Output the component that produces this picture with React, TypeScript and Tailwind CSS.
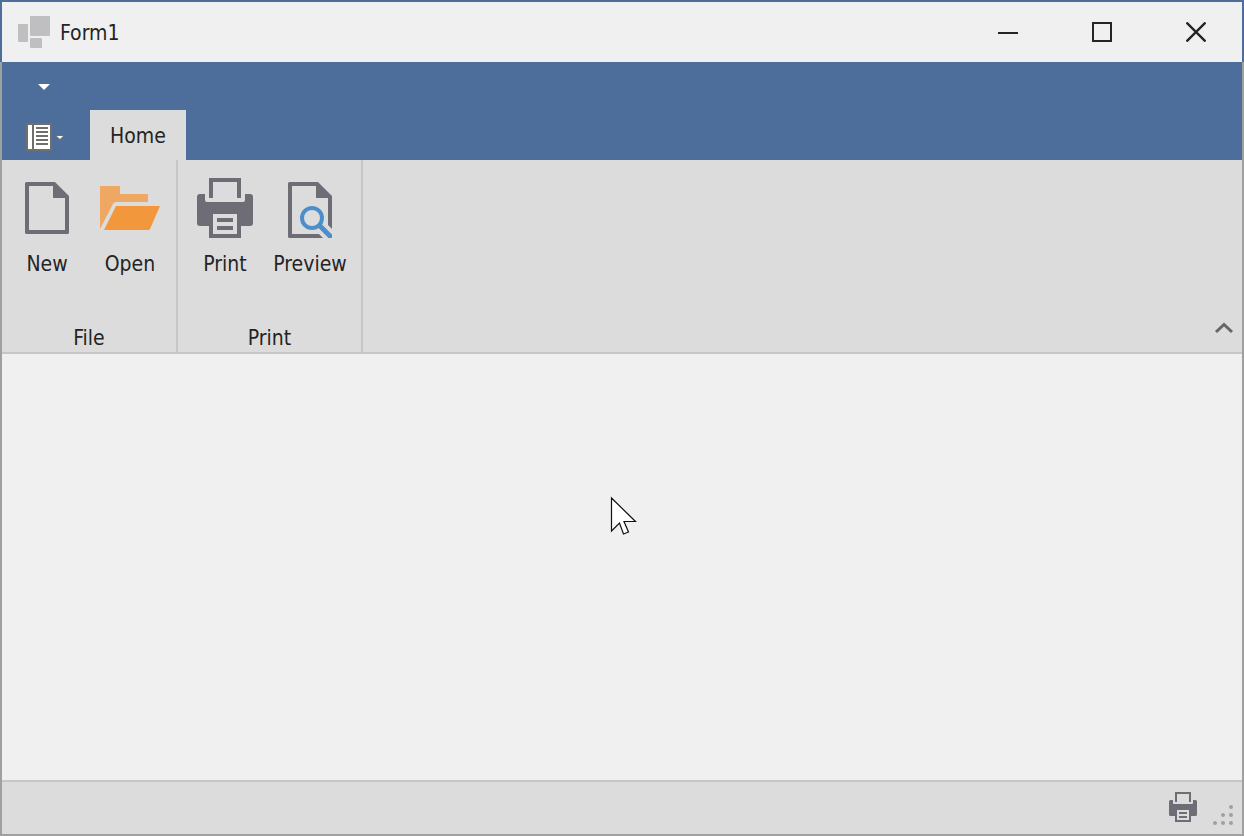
import type { ReactNode } from "react";

interface IconProps {
  className?: string;
}

function AppLogo() {
  return (
    <svg className="h-8 w-8 shrink-0" viewBox="0 0 32 32" fill="#bfbec1" aria-hidden="true">
      <rect x="0" y="8" width="10" height="18" rx="1" />
      <rect x="12" y="0" width="20" height="20" rx="1" />
      <rect x="12" y="22" width="12" height="10" rx="1" />
    </svg>
  );
}

function NewIcon() {
  return (
    <svg className="h-15 w-11" viewBox="0 0 44 60" fill="#6e6d75" aria-hidden="true">
      <path
        fillRule="evenodd"
        d="M1.5 4H30L44 18V54.500Q44 56 42.500 56H1.500Q0 56 0 54.500V5.500Q0 4 1.500 4ZM4 8V52H40V20H28V8Z"
      />
    </svg>
  );
}

function OpenIcon() {
  return (
    <svg className="h-15 w-15" viewBox="0 0 60 60" aria-hidden="true">
      <path fill="#efa764" d="M0 9Q0 8 1 8H19Q20 8 20 9V16H47Q48 16 48 17V24H16Q14 24 13 26L0 51Z" />
      <path fill="#f2973c" d="M16 28H60L50 51Q49.500 52 48.500 52H4Z" />
    </svg>
  );
}

function PrintIcon({ className }: IconProps) {
  return (
    <svg className={className} viewBox="0 0 56 60" fill="#6e6d75" aria-hidden="true">
      <path d="M12 0H44V20H40V4H16V20H12Z" />
      <path
        fillRule="evenodd"
        d="M3 16H8V22Q8 24 10 24H46Q48 24 48 22V16H53Q56 16 56 19V45Q56 48 53 48H44V60H12V48H3Q0 48 0 45V19Q0 16 3 16ZM16 36V56H40V36Z"
      />
      <path d="M20 40H36V44H20ZM20 48H36V52H20Z" />
    </svg>
  );
}

function PreviewIcon() {
  return (
    <svg className="h-15 w-11" viewBox="0 0 44 60" aria-hidden="true">
      <path
        fill="#6e6d75"
        d="M1.500 4H30L44 18V51L40 47V20H28V8H4V56H31L35 60H1.500Q0 60 0 58.500V5.500Q0 4 1.500 4Z"
      />
      <circle cx="24" cy="40" r="10" fill="none" stroke="#4c8ecc" strokeWidth="4" />
      <path d="M32 48L42 58" stroke="#4c8ecc" strokeWidth="5" strokeLinecap="round" />
    </svg>
  );
}

function MenuIcon() {
  return (
    <svg className="h-7 w-[38px]" viewBox="0 0 38 28" aria-hidden="true">
      <path fill="#716f6e" d="M0 0H26V28H0Z" />
      <path fill="#fff" d="M2 2H6V26H2ZM8 2H24V26H8Z" />
      <path fill="#716f6e" d="M10 4H22V6H10ZM10 8H22V10H10ZM10 12H22V14H10ZM10 16H22V18H10ZM10 20H22V22H10Z" />
      <path fill="#fff" stroke="#716f6e" d="M29.500 12.500H38L34 16.500Z" />
    </svg>
  );
}

interface RibbonButtonProps {
  label: string;
  icon: ReactNode;
  className: string;
}

function RibbonButton({ label, icon, className }: RibbonButtonProps) {
  return (
    <button type="button" className={`flex flex-col items-center gap-[10px] hover:bg-[#cfcfd2] ${className}`}>
      {icon}
      <span className="leading-8">{label}</span>
    </button>
  );
}

interface RibbonGroupProps {
  title: string;
  children: ReactNode;
}

function RibbonGroup({ title, children }: RibbonGroupProps) {
  return (
    <section aria-label={title} className="flex flex-col justify-between border-r-2 border-[#c6c6c6]">
      <div className="flex px-1 pt-[18px]">{children}</div>
      <div className="text-center leading-7">{title}</div>
    </section>
  );
}

function TitleBar() {
  const controlClass = "flex w-[92px] items-center justify-center hover:bg-[#dcdcdc]";

  return (
    <header className="flex h-[62px] items-stretch border-x-2 border-t-2 border-[#4d6e9b] bg-[#f0f0f0]">
      <div className="flex flex-1 items-center gap-[10px] pl-4">
        <AppLogo />
        <h1 className="pt-[2px]">Form1</h1>
      </div>
      <div className="flex gap-[2px]">
        <button type="button" aria-label="Minimize" className={controlClass}>
          <svg className="h-5 w-5" viewBox="0 0 20 20" fill="#242424">
            <path d="M0 10H20V12H0Z" />
          </svg>
        </button>
        <button type="button" aria-label="Maximize" className={controlClass}>
          <svg className="h-5 w-5" viewBox="0 0 20 20" fill="none" stroke="#242424" strokeWidth="2">
            <path d="M1 1H19V19H1Z" />
          </svg>
        </button>
        <button type="button" aria-label="Close" className={controlClass}>
          <svg className="h-5 w-5" viewBox="0 0 20 20" fill="none" stroke="#242424" strokeWidth="2.400">
            <path d="M0.500 0.500L19.500 19.500M19.500 0.500L0.500 19.500" />
          </svg>
        </button>
      </div>
    </header>
  );
}

function RibbonTabs() {
  return (
    <div className="bg-[#4d6e9b]">
      <div className="flex h-12 items-center pl-7">
        <button
          type="button"
          aria-label="Customize quick access toolbar"
          className="flex h-8 w-7 items-center justify-center pt-[2px]"
        >
          <svg className="h-[6px] w-3" viewBox="0 0 12 6" fill="#fff">
            <path d="M0 0H12L6 6Z" />
          </svg>
        </button>
      </div>
      <div className="flex h-[50px]">
        <button type="button" aria-label="Application menu" className="flex w-[88px] items-center pt-1 pl-6">
          <MenuIcon />
        </button>
        <div role="tablist" className="flex">
          <button type="button" role="tab" aria-selected="true" className="w-24 bg-[#dcdcdc] pt-[2px]">
            Home
          </button>
        </div>
      </div>
    </div>
  );
}

function Ribbon() {
  return (
    <div className="flex h-[194px] border-b-2 border-[#c6c6c6] bg-[#dcdcdc]">
      <RibbonGroup title="File">
        <RibbonButton label="New" icon={<NewIcon />} className="w-[82px]" />
        <RibbonButton label="Open" icon={<OpenIcon />} className="w-[84px]" />
      </RibbonGroup>
      <RibbonGroup title="Print">
        <RibbonButton label="Print" icon={<PrintIcon className="h-15 w-14" />} className="w-[86px]" />
        <RibbonButton label="Preview" icon={<PreviewIcon />} className="mr-[5px] w-[84px]" />
      </RibbonGroup>
      <button type="button" aria-label="Collapse ribbon" className="mt-auto mb-3 ml-auto flex h-6 w-9 items-center justify-center">
        <svg className="h-3 w-5" viewBox="0 0 20 12" fill="none" stroke="#666" strokeWidth="3">
          <path d="M2 10L10 2.500L18 10" />
        </svg>
      </button>
    </div>
  );
}

function StatusBar() {
  return (
    <footer className="flex h-[54px] items-center justify-end border-t-2 border-[#c6c6c6] bg-[#dcdcdc] pr-[9px] pb-[2px]">
      <button type="button" aria-label="Print" className="mr-4">
        <PrintIcon className="h-[30px] w-7" />
      </button>
      <svg className="mt-4 h-5 w-5" viewBox="0 0 20 20" fill="#a0a0a0" aria-hidden="true">
        <circle cx="18" cy="2" r="2" />
        <circle cx="10" cy="10" r="2" />
        <circle cx="18" cy="10" r="2" />
        <circle cx="2" cy="18" r="2" />
        <circle cx="10" cy="18" r="2" />
        <circle cx="18" cy="18" r="2" />
      </svg>
    </footer>
  );
}

export default function App() {
  return (
    <div className="flex min-h-screen flex-col font-['DejaVu_Sans_Condensed','Noto_Sans',sans-serif] text-[21px] leading-8 text-[#242424]">
      <TitleBar />
      <div className="flex flex-1 flex-col border-x-2 border-b-2 border-[#a0a0a0]">
        <RibbonTabs />
        <Ribbon />
        <main className="relative flex-1 bg-[#f0f0f0]">
          {/* mouse pointer */}
          <svg
            className="absolute top-[142px] left-[608px] h-10 w-7"
            viewBox="0 0 28 40"
            fill="#fff"
            stroke="#111"
            strokeWidth="1.200"
            aria-hidden="true"
          >
            <path d="M1.500 2V35L9.500 27L13.500 38L18.500 36L14 25.500H25.500Z" />
          </svg>
        </main>
        <StatusBar />
      </div>
    </div>
  );
}
